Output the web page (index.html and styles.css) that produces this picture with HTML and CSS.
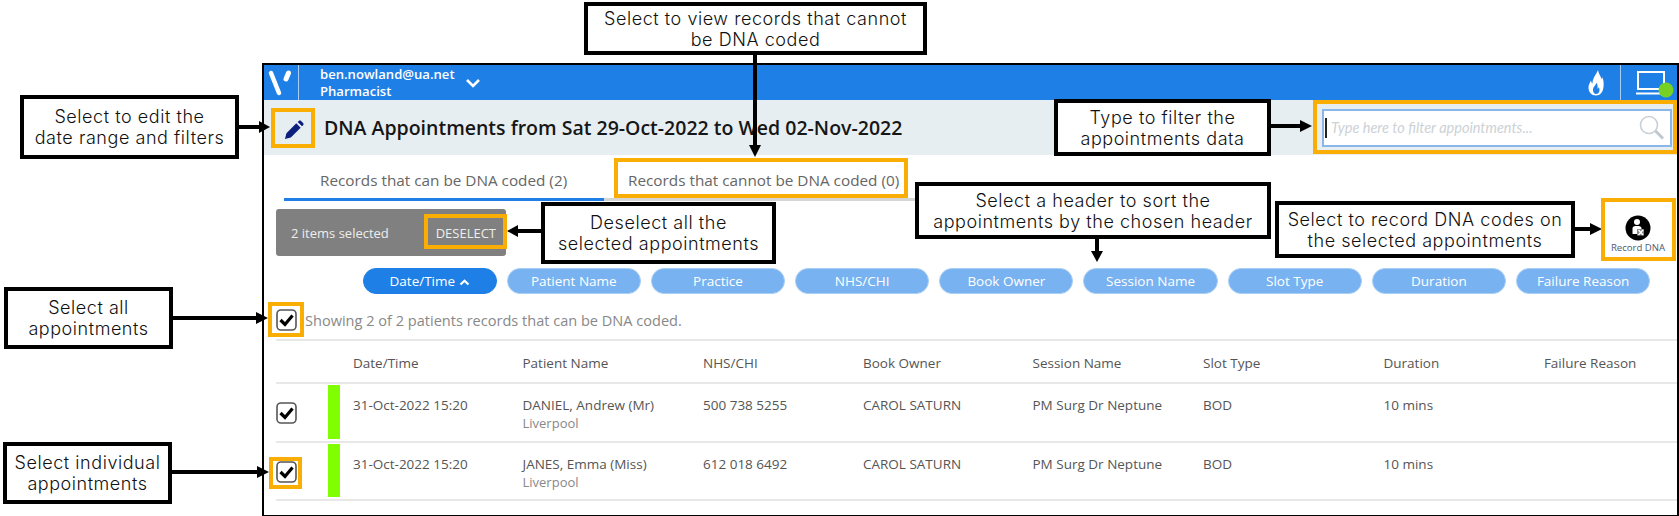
FILE: index.html
```html
<!DOCTYPE html>
<html lang="en">
<head>
<meta charset="utf-8">
<title>DNA Appointments</title>
<link rel="stylesheet" href="styles.css">
</head>
<body>
<div class="canvas">
  <main class="app">
    <header class="topbar">
      <div class="logo">
        <svg width="35" height="35" viewBox="0 0 35 35"><path d="M7 8 L15 28" stroke="#fff" stroke-width="4.5" stroke-linecap="round"/><path d="M24.5 8 L22 14" stroke="#fff" stroke-width="5" stroke-linecap="round"/></svg>
      </div>
      <div class="user"><div>ben.nowland@ua.net</div><div>Pharmacist</div></div>
      <svg class="chev" width="16" height="10" viewBox="0 0 16 10"><path d="M2 2 L8 8 L14 2" fill="none" stroke="#fff" stroke-width="2.6"/></svg>
      <svg class="flame" width="16" height="26" viewBox="0 0 16 26"><path fill-rule="evenodd" fill="#fff" d="M10 0 C10.500 4 13 6 13.500 9 C14 8.500 14.300 8 14.300 7 C15.500 10 16 13 15.500 17 C15 22 12 25.500 8 25.500 C3.500 25.500 0.500 22 0.500 17.500 C0.500 14.500 2 12.500 3 10.500 C3.200 12 3.700 13 4.500 13.500 C4.500 8 8 5 10 0 Z M8.500 12.500 C8.300 15 5 16.500 5 20 C5 22.500 6.500 24 8 24 C10 24 11.500 22.500 11.500 20 C11.500 18.500 11 17.500 10.500 17 C10.300 18 10 18.500 9.500 18.800 C9.800 16 9.500 14 8.500 12.500 Z"/></svg>
      <div class="status">
        <svg width="46" height="32" viewBox="0 0 46 32"><path d="M9 4 H35 V21 H9 Z" fill="none" stroke="#fff" stroke-width="2"/><path d="M7 25.500 H37" stroke="#fff" stroke-width="2"/><circle cx="37" cy="22" r="7.500" fill="#76d123"/></svg>
      </div>
    </header>

    <section class="titlebar">
      <div class="edit">
        <svg width="20" height="20" viewBox="0 0 22 22"><path fill="#0c1f7c" d="M1 21 L2.700 14.500 L13.500 3.700 L18.300 8.500 L7.500 19.300 Z M15 2.200 L16.300 1 C17 0.300 18 0.300 18.800 1 L21 3.200 C21.700 4 21.700 5 21 5.700 L19.800 7 Z"/></svg>
      </div>
      <h1>DNA Appointments from Sat 29-Oct-2022 to Wed 02-Nov-2022</h1>
      <div class="search">
        <span class="caret"></span>
        <span class="placeholder">Type here to filter appointments...</span>
        <svg width="26" height="25" viewBox="0 0 26 25"><circle cx="10" cy="10" r="8.500" fill="none" stroke="#c9d0d6" stroke-width="1.600"/><path d="M16.500 16 L24 23.500" stroke="#c0c8ce" stroke-width="3"/></svg>
      </div>
    </section>

    <nav class="tabs">
      <div class="tab active">Records that can be DNA coded (2)</div>
      <div class="tab">Records that cannot be DNA coded (0)</div>
    </nav>

    <div class="toolbar">
      <div class="selbar"><span>2 items selected</span><span class="deselect">DESELECT</span></div>
      <button class="record">
        <svg width="26" height="26" viewBox="0 0 26 26"><circle cx="13" cy="13" r="12.500" fill="#000"/><circle cx="12" cy="7" r="3" fill="#fff"/><path d="M7.500 19 V13.500 C7.500 11.500 9 11 12 11 C15 11 16.500 11.500 16.500 13.500 V19 Z" fill="#fff"/><path d="M12 14 H19 V20.500 H12 Z" fill="#888"/><path d="M13.500 15 L18 20 M18 15 L13.500 20" stroke="#fff" stroke-width="1.300"/></svg>
        <span>Record DNA</span>
      </button>
    </div>

    <div class="pills">
      <button class="pill on">Date/Time <svg width="11" height="7" viewBox="0 0 11 7"><path d="M1.500 5.500 L5.500 1.800 L9.500 5.500" fill="none" stroke="#fff" stroke-width="2.200"/></svg></button>
      <button class="pill">Patient Name</button>
      <button class="pill">Practice</button>
      <button class="pill">NHS/CHI</button>
      <button class="pill">Book Owner</button>
      <button class="pill">Session Name</button>
      <button class="pill">Slot Type</button>
      <button class="pill">Duration</button>
      <button class="pill">Failure Reason</button>
    </div>

    <div class="summary">
      <svg class="check" width="21" height="22" viewBox="0 0 21 22"><rect x="1" y="1" width="19" height="20" rx="4" fill="#fff" stroke="#555" stroke-width="1.600"/><path d="M4.500 11 L9 15.500 L16.500 6.500" fill="none" stroke="#000" stroke-width="3.200"/></svg>
      <span>Showing 2 of 2 patients records that can be DNA coded.</span>
    </div>

    <div class="grid head">
      <div></div><div></div>
      <div>Date/Time</div><div>Patient Name</div><div>NHS/CHI</div><div>Book Owner</div><div>Session Name</div><div>Slot Type</div><div>Duration</div><div>Failure Reason</div>
    </div>
    <div class="grid row">
      <div class="cellcheck"><svg class="check" width="21" height="22" viewBox="0 0 21 22"><rect x="1" y="1" width="19" height="20" rx="4" fill="#fff" stroke="#555" stroke-width="1.600"/><path d="M4.500 11 L9 15.500 L16.500 6.500" fill="none" stroke="#000" stroke-width="3.200"/></svg></div>
      <div class="flag"></div>
      <div>31-Oct-2022 15:20</div>
      <div>DANIEL, Andrew (Mr)<div class="sub">Liverpool</div></div>
      <div>500 738 5255</div><div>CAROL SATURN</div><div>PM Surg Dr Neptune</div><div>BOD</div><div>10 mins</div><div></div>
    </div>
    <div class="grid row">
      <div class="cellcheck"><svg class="check" width="21" height="22" viewBox="0 0 21 22"><rect x="1" y="1" width="19" height="20" rx="4" fill="#fff" stroke="#555" stroke-width="1.600"/><path d="M4.500 11 L9 15.500 L16.500 6.500" fill="none" stroke="#000" stroke-width="3.200"/></svg></div>
      <div class="flag"></div>
      <div>31-Oct-2022 15:20</div>
      <div>JANES, Emma (Miss)<div class="sub">Liverpool</div></div>
      <div>612 018 6492</div><div>CAROL SATURN</div><div>PM Surg Dr Neptune</div><div>BOD</div><div>10 mins</div><div></div>
    </div>
  </main>

  <svg class="arrows" width="1679" height="516" viewBox="0 0 1679 516">
    <g stroke="#000" stroke-width="4" fill="#000">
      <path d="M238 127 H262"/><path stroke="none" d="M270 127 L259 121 V133 Z"/>
      <path d="M755 55 V148"/><path stroke="none" d="M755 157 L749 145 H761 Z"/>
      <path d="M1271 126 H1304"/><path stroke="none" d="M1312 126 L1300 120 V132 Z"/>
      <path d="M515 231 H541"/><path stroke="none" d="M507 231 L518 225 V237 Z"/>
      <path d="M1097 239 V255"/><path stroke="none" d="M1097 262 L1091 251 H1103 Z"/>
      <path d="M1575 229 H1594"/><path stroke="none" d="M1602 229 L1590 223 V235 Z"/>
      <path d="M173 318 H260"/><path stroke="none" d="M268 318 L256 312 V324 Z"/>
      <path d="M172 472 H261"/><path stroke="none" d="M269 472 L257 466 V478 Z"/>
    </g>
  </svg>

  <div class="hl hl-edit"></div>
  <div class="hl hl-tab"></div>
  <div class="hl hl-search"></div>
  <div class="hl hl-deselect"></div>
  <div class="hl hl-record"></div>
  <div class="hl hl-all"></div>
  <div class="hl hl-one"></div>

  <div class="note n-edit">Select to edit the<br>date range and filters</div>
  <div class="note n-view">Select to view records that cannot<br>be DNA coded</div>
  <div class="note n-type">Type to filter the<br>appointments data</div>
  <div class="note n-desel">Deselect all the<br>selected appointments</div>
  <div class="note n-sort">Select a header to sort the<br>appointments by the chosen header</div>
  <div class="note n-rec">Select to record DNA codes on<br>the selected appointments</div>
  <div class="note n-all">Select all<br>appointments</div>
  <div class="note n-ind">Select individual<br>appointments</div>
</div>
</body>
</html>
```
FILE: styles.css
```css
* { box-sizing: border-box; }
html, body { margin: 0; padding: 0; background: #fff; }
.canvas {
  position: relative;
  width: 1679px;
  height: 516px;
  overflow: hidden;
  font-family: "Open Sans", "Noto Sans", sans-serif;
}

/* application window */
.app {
  position: absolute;
  left: 262px;
  top: 63px;
  width: 1417px;
  height: 453px;
  border: 2px solid #000;
  border-bottom-width: 1px;
  background: #fff;
  font-size: 13.5px;
  color: #555;
}
.topbar {
  display: flex;
  align-items: center;
  height: 35px;
  background: #1e80e6;
  color: #fff;
}
.logo {
  width: 35px;
  height: 35px;
  border-right: 1px solid #a9cdf4;
  flex: none;
}
.logo svg { display: block; }
.user {
  margin-left: 21px;
  font-size: 13.1px;
  font-weight: 600;
  line-height: 17px;
}
.chev { margin-left: 10px; }
.flame { margin-left: auto; margin-right: 16px; }
.status {
  width: 57px;
  height: 35px;
  border-left: 1px solid #a9cdf4;
  flex: none;
  padding-top: 3px;
  padding-left: 8px;
}
.status svg { display: block; }

.titlebar {
  display: flex;
  align-items: center;
  height: 55px;
  background: #e7eef2;
}
.edit {
  width: 60px;
  flex: none;
  padding-left: 20px;
  padding-top: 4px;
}
.edit svg { display: block; }
h1 {
  margin: 0;
  font-size: 19.5px;
  font-weight: 600;
  color: #161616;
  white-space: nowrap;
}
.search {
  display: flex;
  align-items: center;
  margin-left: auto;
  margin-right: 5px;
  width: 350px;
  height: 38px;
  background: #fff;
  border: 2px solid #8ab6ea;
  padding: 0 5px 0 1px;
}
.caret {
  width: 2px;
  height: 20px;
  background: #222;
  margin-right: 4px;
}
.placeholder {
  font-style: italic;
  color: #ccd2d6;
  font-size: 14.5px;
  font-family: Lato, "Open Sans", sans-serif;
}
.search svg { margin-left: auto; }

.tabs {
  display: flex;
  height: 46px;
  margin-left: 20px;
  width: 633px;
  border-bottom: 3px solid #d5d5d5;
  font-size: 15.3px;
}
.tab {
  padding-top: 15px;
  color: #666;
  line-height: 20px;
}
.tab.active {
  width: 320px;
  padding-left: 36px;
  border-bottom: 3px solid #1e80e6;
  height: 46px;
}
.tab + .tab { padding-left: 24px; }

.toolbar {
  display: flex;
  justify-content: space-between;
  margin-left: 12px;
  padding-top: 8px;
  height: 55px;
}
.selbar {
  display: flex;
  justify-content: space-between;
  align-items: center;
  width: 230px;
  height: 47px;
  padding: 0 10px 0 15px;
  background: #808080;
  border-radius: 3px;
  color: #eee;
  font-size: 13px;
}
.record {
  display: flex;
  flex-direction: column;
  align-items: center;
  width: 72px;
  margin: 6px 3px 0 0;
  padding: 0;
  border: 0;
  height: 40px;
  background: none;
  color: #4b5b72;
  font: 9.6px/13px "Open Sans", sans-serif;
  white-space: nowrap;
}
.record svg { flex: none; }

.pills {
  display: flex;
  gap: 10px;
  margin-left: 98.5px;
  margin-top: 12px;
  height: 26px;
}
.pill {
  width: 134.2px;
  height: 26px;
  border: 1px solid #a9cff7;
  border-radius: 13px;
  background: #78b2f0;
  color: #fff;
  font: 13.5px "Open Sans", sans-serif;
  padding: 0;
}
.pill.on { background: #1e80e6; border-color: #1e80e6; }

.summary {
  display: flex;
  align-items: center;
  gap: 8px;
  margin-left: 12px;
  height: 47px;
  padding-top: 7px;
  font-size: 14.55px;
  color: #888;
  border-bottom: 2px solid #e8e8e8;
}
.check { display: block; }

.grid {
  display: grid;
  grid-template-columns: 52px 25px 169.5px 180.5px 160px 169.5px 170.5px 180.5px 160.4px 1fr;
  margin-left: 12px;
  border-bottom: 2px solid #e8e8e8;
}
.head {
  height: 43px;
  padding-top: 2px;
  align-items: center;
}
.row {
  height: 58.5px;
  line-height: 20px;
}
.row > div { padding-top: 11px; }
.row > .cellcheck { padding-top: 2px; align-self: center; }
.row > .flag {
  width: 12px;
  padding: 0;
  margin: 1px 0 2px;
  background: #80ff00;
}
.sub {
  margin-top: -2px;
  color: #888;
  font-size: 13px;
}

/* orange highlights */
.hl {
  position: absolute;
  border: 4px solid #faad03;
}
.hl-edit { left: 271px; top: 108px; width: 44px; height: 40px; }
.hl-tab { left: 614px; top: 158px; width: 294px; height: 40px; }
.hl-search { left: 1313px; top: 100px; width: 364px; height: 54px; }
.hl-deselect { left: 424px; top: 214px; width: 83px; height: 35px; }
.hl-record { left: 1601px; top: 198px; width: 75px; height: 63px; }
.hl-all { left: 268px; top: 302px; width: 36px; height: 35px; }
.hl-one { left: 269px; top: 457px; width: 33px; height: 32px; }

/* callouts */
.arrows { position: absolute; left: 0; top: 0; }
.note {
  position: absolute;
  display: flex;
  align-items: center;
  justify-content: center;
  text-align: center;
  background: #fff;
  border: 4px solid #000;
  color: #111;
  font: 300 18px/21px Inter, Lato, sans-serif;
  letter-spacing: 0.55px;
  white-space: nowrap;
}
.n-edit { left: 20px; top: 95px; width: 219px; height: 64px; }
.n-view { left: 584px; top: 2px; width: 343px; height: 53px; }
.n-type { left: 1054px; top: 99px; width: 217px; height: 57px; }
.n-desel { left: 541px; top: 202px; width: 235px; height: 62px; }
.n-sort { left: 915px; top: 182px; width: 356px; height: 57px; }
.n-rec { left: 1275px; top: 201px; width: 300px; height: 57px; }
.n-all { left: 4px; top: 287px; width: 169px; height: 62px; }
.n-ind { left: 3px; top: 442px; width: 169px; height: 62px; }
```
